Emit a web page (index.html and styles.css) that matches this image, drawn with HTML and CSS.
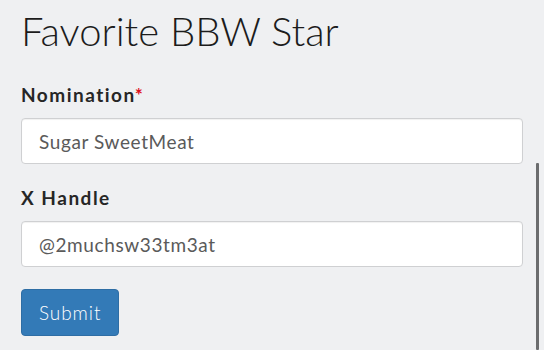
FILE: index.html
```html
<!DOCTYPE html>
<html lang="en">
<head>
<meta charset="utf-8">
<title>Favorite BBW Star</title>
<link rel="stylesheet" href="styles.css">
</head>
<body>
<main class="page">
  <h1 class="title">Favorite BBW Star</h1>
  <form class="form">
    <div class="group">
      <label class="label" for="nom">Nomination<span class="req">*</span></label>
      <input class="field" id="nom" type="text" value="Sugar SweetMeat">
    </div>
    <div class="group">
      <label class="label" for="handle">X Handle</label>
      <input class="field" id="handle" type="text" value="@2muchsw33tm3at">
    </div>
    <div class="actions">
      <button class="btn" type="button">Submit</button>
    </div>
  </form>
</main>
<div class="scrollbar"></div>
</body>
</html>
```
FILE: styles.css
```css
html, body {
  margin: 0;
  padding: 0;
  background: #eff0f2;
  height: 100%;
  overflow: hidden;
}
body {
  font-family: Lato, "Open Sans", "Liberation Sans", sans-serif;
  color: #222;
}
.page {
  padding: 9px 21px 0 21px;
  display: flex;
  flex-direction: column;
}
.title {
  margin: 0;
  font-size: 40px;
  line-height: 44px;
  font-weight: 300;
  color: #1c1c1c;
}
.form {
  margin-top: 30px;
  display: flex;
  flex-direction: column;
  gap: 22px;
}
.group {
  display: flex;
  flex-direction: column;
  gap: 11px;
}
.label {
  font-size: 19px;
  line-height: 24px;
  font-weight: 700;
  letter-spacing: 1.5px;
  color: #262626;
}
.req {
  color: #e0101a;
  letter-spacing: 0;
  margin-left: -1px;
}
.field {
  box-sizing: border-box;
  height: 46px;
  width: 100%;
  margin: 0;
  padding: 0 17px;
  border: 1px solid #cfd0d2;
  border-radius: 4px;
  background: #fff;
  font-family: inherit;
  font-size: 19px;
  font-weight: 400;
  letter-spacing: 0.6px;
  color: #5a5a5a;
  box-shadow: inset 0 1px 1px rgba(0,0,0,0.06);
  outline: none;
}
.actions {
  display: flex;
}
.btn {
  box-sizing: border-box;
  height: 47px;
  padding: 0 17px;
  border: 1px solid #2e6da4;
  border-radius: 4px;
  background: #337ab7;
  color: #fff;
  font-family: inherit;
  font-size: 19px;
  font-weight: 300;
  letter-spacing: 0.9px;
}
.scrollbar {
  position: absolute;
  left: 536px;
  top: 163px;
  width: 3px;
  height: 187px;
  background: #6b6c6e;
  border-radius: 1px;
}
```
